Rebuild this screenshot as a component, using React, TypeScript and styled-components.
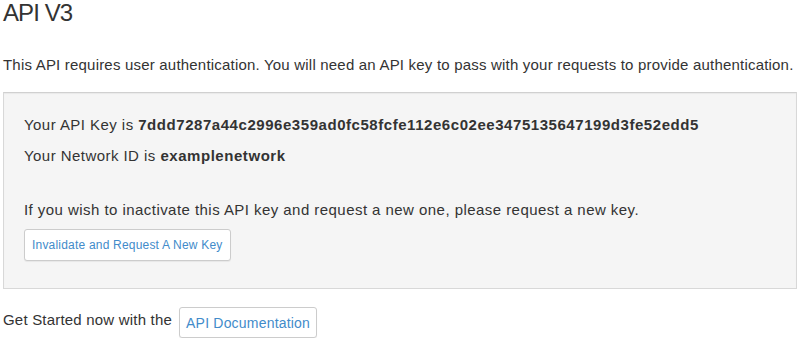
import React from "react";
import styled, { createGlobalStyle } from "styled-components";

const Global = createGlobalStyle`
  html, body { margin: 0; padding: 0; background: #ffffff; }
  body {
    font-family: "Liberation Sans", Arial, Helvetica, sans-serif;
    font-size: 15px;
    letter-spacing: 0.2px;
    line-height: 20px;
    color: #333333;
  }
  * { box-sizing: border-box; }
`;

const Page = styled.div`
  padding: 0 3px;
  width: 800px;
`;

const Title = styled.h3`
  margin: 0;
  font-size: 24px;
  font-weight: 300;
  letter-spacing: -0.9px;
  line-height: 26px;
  color: #333333;
`;

const Intro = styled.p`
  margin: 29px 0 17px;
`;

const Well = styled.div`
  width: 794px;
  background: #f5f5f5;
  border: 1px solid #d8d8d8;
  border-top-color: #d0d0d0;
  box-shadow: inset 0 1px 1px rgba(0, 0, 0, 0.05);
  padding: 22px 20px 27px;
`;

const Line = styled.p<{ $gap?: number }>`
  margin: 0 0 ${(p) => p.$gap ?? 11}px;
  letter-spacing: 0.45px;
`;

const Strong = styled.strong`
  font-weight: 700;
  letter-spacing: 0.55px;
  color: #333333;
`;

const Button = styled.button<{ $size?: "sm" | "md" }>`
  display: inline-block;
  background: #ffffff;
  border: 1px solid #cccccc;
  border-radius: 3px;
  color: #428bca;
  font-family: "Liberation Sans", Arial, Helvetica, sans-serif;
  letter-spacing: 0.2px;
  font-size: ${(p) => (p.$size === "sm" ? "12px" : "14px")};
  line-height: ${(p) => (p.$size === "sm" ? "18px" : "20px")};
  padding: ${(p) => (p.$size === "sm" ? "6px 7px" : "5px 6px 4px")};
  box-shadow: 0 1px 1px rgba(0, 0, 0, 0.06);
  cursor: pointer;
`;

const Footer = styled.div`
  display: flex;
  align-items: flex-start;
  gap: 7px;
  margin-top: 18px;
`;

const FooterText = styled.span`
  margin-top: 3px;
`;

export default function App() {
  return (
    <>
      <Global />
      <Page>
        <Title>API V3</Title>
        <Intro>
          This API requires user authentication. You will need an API key to pass with your
          requests to provide authentication.
        </Intro>
        <Well>
          <Line>
            Your API Key is <Strong>7ddd7287a44c2996e359ad0fc58fcfe112e6c02ee3475135647199d3fe52edd5</Strong>
          </Line>
          <Line $gap={34}>
            Your Network ID is <Strong>examplenetwork</Strong>
          </Line>
          <Line $gap={9}>
            If you wish to inactivate this API key and request a new one, please request a new key.
          </Line>
          <Button $size="sm">Invalidate and Request A New Key</Button>
        </Well>
        <Footer>
          <FooterText>Get Started now with the</FooterText>
          <Button>API Documentation</Button>
        </Footer>
      </Page>
    </>
  );
}
